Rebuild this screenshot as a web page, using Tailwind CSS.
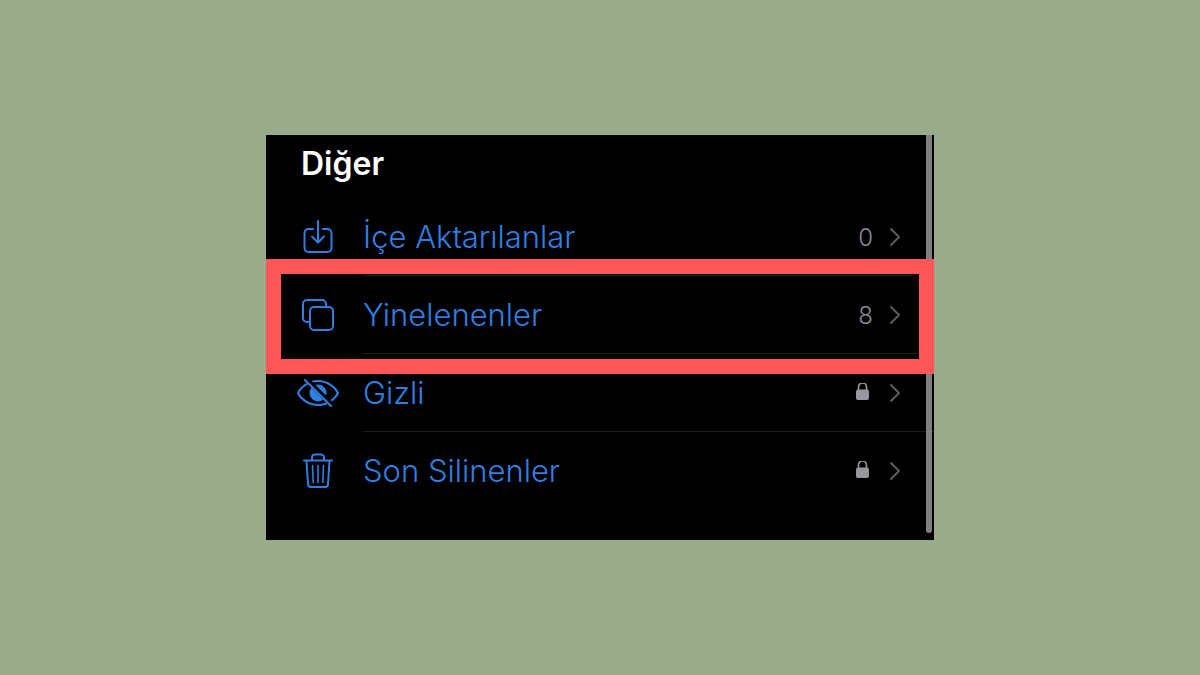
<!DOCTYPE html>
<html lang="tr">

<head>
    <meta charset="UTF-8">
    <meta name="viewport" content="width=device-width, initial-scale=1.0">
    <title>Diğer</title>
    <script src="https://cdn.jsdelivr.net/npm/@tailwindcss/browser@4"></script>
</head>

<body class="bg-[#9aab89] min-h-screen flex items-center justify-center font-['Inter','Liberation_Sans',sans-serif]">
    <main class="relative w-full max-w-[668px] bg-black pb-[30px]">
        <h1 class="h-[63px] pl-[35px] pt-2 text-[32px] leading-[42px] font-semibold text-white">Diğer</h1>
        <ul>
            <li>
                <a href="#" class="flex h-[78px] text-[#2f7fe0]">
                    <span class="w-[97px] shrink-0 flex items-center pl-[30px]">
                        <svg class="size-11" viewBox="0 0 44 44" fill="none" stroke="currentColor" stroke-width="2" stroke-linecap="round" stroke-linejoin="round">
                            <path d="M17 14h-4.500a4 4 0 0 0-4 4v15a4 4 0 0 0 4 4h19a4 4 0 0 0 4-4V18a4 4 0 0 0-4-4H27M22 6v21M16 21.500l6 6 6-6" />
                        </svg>
                    </span>
                    <span class="flex-1 flex items-center border-b border-[#1c1c1e] pr-[33px]">
                        <span class="flex-1 pt-0.5 text-[31px] font-[350]">İçe Aktarılanlar</span>
                        <span class="pt-0.5 text-2xl font-[350] text-[#8b8b90] pr-4">0</span>
                        <svg class="w-3 h-5" viewBox="0 0 12 20" fill="none" stroke="#5c5c60" stroke-width="2" stroke-linecap="round" stroke-linejoin="round">
                            <path d="M2 2l8 8-8 8" />
                        </svg>
                    </span>
                </a>
            </li>
            <li class="relative">
                <a href="#" class="flex h-[78px] text-[#2f7fe0]">
                    <span class="w-[97px] shrink-0 flex items-center pl-[30px]">
                        <svg class="size-11" viewBox="0 0 44 44" fill="none" stroke="currentColor" stroke-width="2" stroke-linejoin="round">
                            <path d="M13.500 29H11a4 4 0 0 1-4-4V11a4 4 0 0 1 4-4h15a4 4 0 0 1 4 4v2.500" />
                            <rect x="14" y="14" width="23" height="23" rx="4" />
                        </svg>
                    </span>
                    <span class="flex-1 flex items-center border-b border-[#1c1c1e] pr-[33px]">
                        <span class="flex-1 pt-0.5 text-[31px] font-[350]">Yinelenenler</span>
                        <span class="pt-0.5 text-2xl font-[350] text-[#8b8b90] pr-4">8</span>
                        <svg class="w-3 h-5" viewBox="0 0 12 20" fill="none" stroke="#5c5c60" stroke-width="2" stroke-linecap="round" stroke-linejoin="round">
                            <path d="M2 2l8 8-8 8" />
                        </svg>
                    </span>
                </a>
                <!-- Highlight frame -->
                <div class="absolute z-10 inset-x-0 -top-[17px] -bottom-5 border-[15px] border-[#ff5757] pointer-events-none"></div>
            </li>
            <li>
                <a href="#" class="flex h-[78px] text-[#2f7fe0]">
                    <span class="w-[97px] shrink-0 flex items-center pl-[30px]">
                        <svg class="size-11" viewBox="0 0 44 44" fill="none" stroke="currentColor" stroke-width="2" stroke-linecap="round">
                            <path d="M2 22C5 15.500 13 10 22 10s17 5.500 20 12c-3 6.500-11 12-20 12S5 28.500 2 22z" />
                            <circle cx="22" cy="22" r="8.500" fill="currentColor" stroke="none" />
                            <path d="M10 8l26 26" stroke="#000" stroke-width="5" />
                            <path d="M9 9l26 26" />
                        </svg>
                    </span>
                    <span class="flex-1 flex items-center border-b border-[#1c1c1e] pr-[33px]">
                        <span class="flex-1 pt-0.5 text-[31px] font-[350]">Gizli</span>
                        <svg class="w-4 h-5 mr-4" viewBox="0 0 16 20" fill="#97979c">
                            <rect x="3" y="6.500" width="13" height="10.500" rx="2" />
                            <path d="M5.500 8V4a4 4 0 0 1 8 0v4" fill="none" stroke="#97979c" stroke-width="1.600" />
                        </svg>
                        <svg class="w-3 h-5 ml-1" viewBox="0 0 12 20" fill="none" stroke="#5c5c60" stroke-width="2" stroke-linecap="round" stroke-linejoin="round">
                            <path d="M2 2l8 8-8 8" />
                        </svg>
                    </span>
                </a>
            </li>
            <li>
                <a href="#" class="flex h-[78px] text-[#2f7fe0]">
                    <span class="w-[97px] shrink-0 flex items-center pl-[30px]">
                        <svg class="size-11" viewBox="0 0 44 44" fill="none" stroke="currentColor" stroke-width="2" stroke-linecap="round" stroke-linejoin="round">
                            <path d="M8 11.500h28M16 11V8.500a3 3 0 0 1 3-3h6a3 3 0 0 1 3 3V11M10.500 12l1.500 23a3 3 0 0 0 3 3h14a3 3 0 0 0 3-3l1.500-23" />
                            <path d="M16.500 16.500l.7 17M22 16.500v17M27.500 16.500l-.7 17" stroke-width="1.600" />
                        </svg>
                    </span>
                    <span class="flex-1 flex items-center border-b border-transparent pr-[33px]">
                        <span class="flex-1 pt-0.5 text-[31px] font-[350]">Son Silinenler</span>
                        <svg class="w-4 h-5 mr-4" viewBox="0 0 16 20" fill="#97979c">
                            <rect x="3" y="6.500" width="13" height="10.500" rx="2" />
                            <path d="M5.500 8V4a4 4 0 0 1 8 0v4" fill="none" stroke="#97979c" stroke-width="1.600" />
                        </svg>
                        <svg class="w-3 h-5 ml-1" viewBox="0 0 12 20" fill="none" stroke="#5c5c60" stroke-width="2" stroke-linecap="round" stroke-linejoin="round">
                            <path d="M2 2l8 8-8 8" />
                        </svg>
                    </span>
                </a>
            </li>
        </ul>
        <!-- Scroll indicator -->
        <div class="absolute top-0 bottom-[7px] right-[2px] w-[6px] rounded-b-full bg-[#808080]"></div>
    </main>
</body>

</html>
